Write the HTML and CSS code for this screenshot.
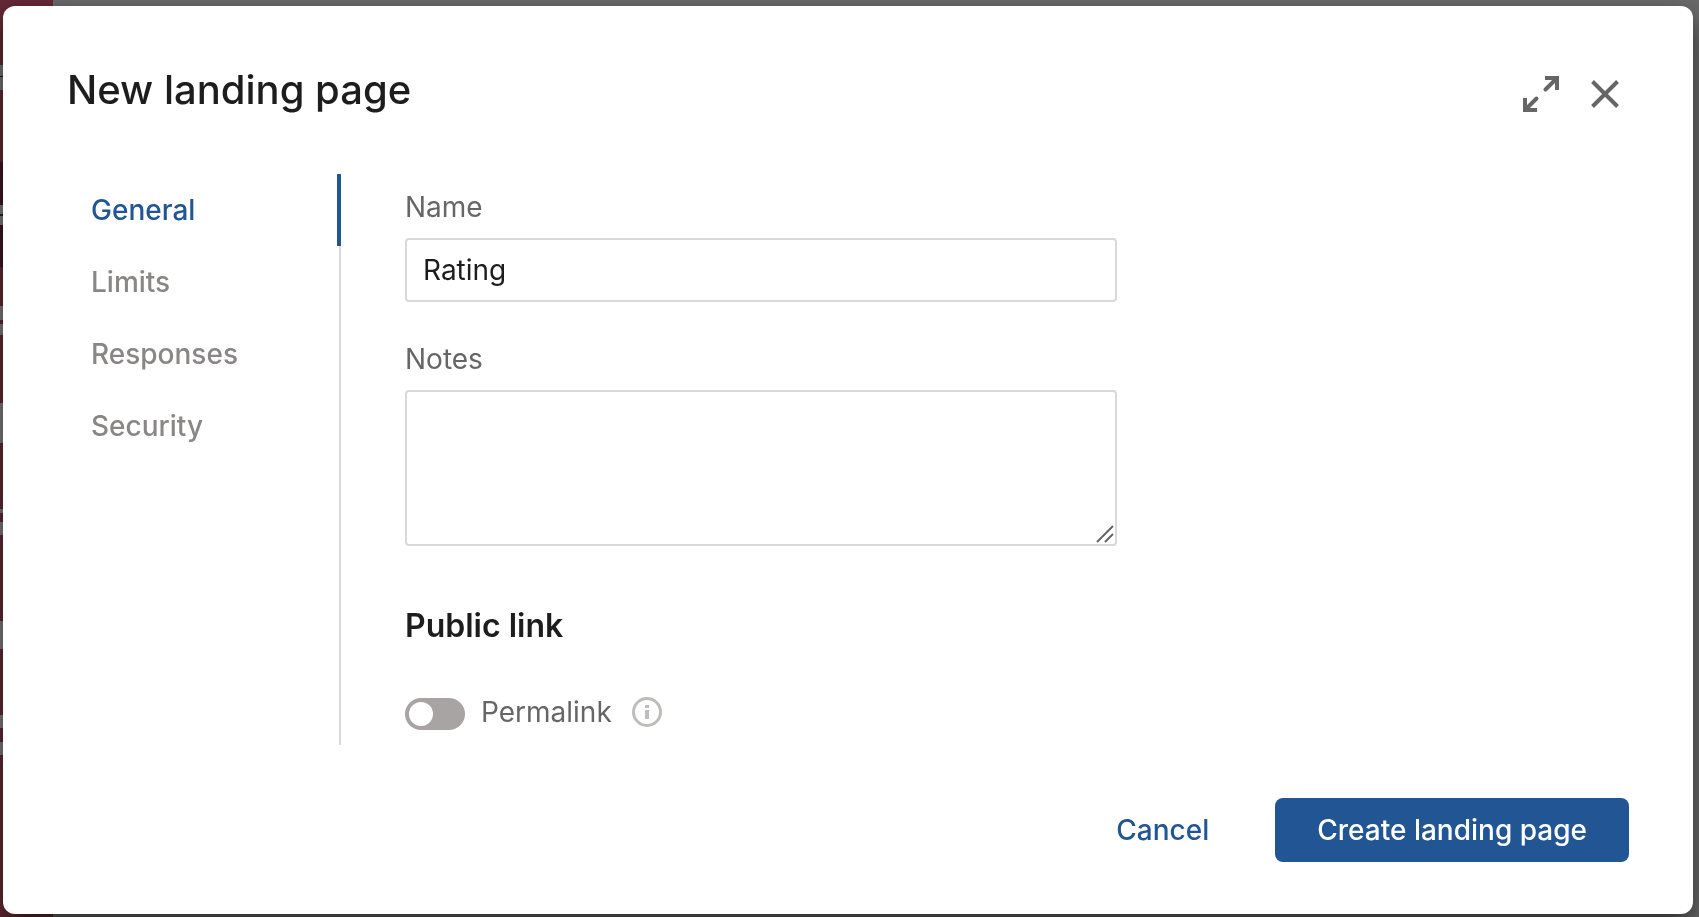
FILE: index.html
```
<!DOCTYPE html>
<html lang="en">
<head>
  <meta charset="UTF-8">
  <meta name="viewport" content="width=device-width, initial-scale=1">
  <title>New landing page</title>
  <link rel="stylesheet" href="styles.css">
</head>
<body>

  <div class="sidebar"></div>

  <div class="overlay">
    <form class="dialog" role="dialog" aria-labelledby="dialog-title" onsubmit="return false">

      <header class="dialog-header">
        <h1 id="dialog-title">New landing page</h1>
        <div class="dialog-actions">
          <button type="button" class="icon-button" aria-label="Expand">
            <svg width="36" height="36" viewBox="0 0 36 36" fill="none" stroke="currentColor" stroke-width="4">
              <path d="M22 2H34V14M2 22V34H14"/>
              <path d="M33 3L22.500 13.500M3 33L13.500 22.500" stroke-linecap="round"/>
            </svg>
          </button>
          <button type="button" class="icon-button" aria-label="Close">
            <svg width="28" height="28" viewBox="0 0 28 28" fill="none" stroke="currentColor" stroke-width="4">
              <path d="M1.500 1.500L26.500 26.500M26.500 1.500L1.500 26.500"/>
            </svg>
          </button>
        </div>
      </header>

      <div class="dialog-body">
        <nav class="tabs">
          <a href="#general" class="tab active">General</a>
          <a href="#limits" class="tab">Limits</a>
          <a href="#responses" class="tab">Responses</a>
          <a href="#security" class="tab">Security</a>
        </nav>

        <div class="content" id="general">
          <div class="field">
            <label for="name">Name</label>
            <input type="text" id="name" class="text-input" value="Rating">
          </div>

          <div class="field">
            <label for="notes">Notes</label>
            <div class="textarea-wrap">
              <textarea id="notes" class="text-input"></textarea>
              <svg class="grip" width="18" height="18" viewBox="0 0 18 18" fill="none" stroke="#5f5f5f" stroke-width="1.800">
                <path d="M1 17L17 1M9 17L17 9"/>
              </svg>
            </div>
          </div>

          <h2>Public link</h2>

          <div class="switch-row">
            <input type="checkbox" id="permalink" class="switch" role="switch">
            <label for="permalink">Permalink</label>
            <button type="button" class="info-button" aria-label="About permalinks">
              <svg width="30" height="30" viewBox="0 0 30 30" fill="none">
                <circle cx="15" cy="15" r="13.500" stroke="currentColor" stroke-width="3"/>
                <path d="M15 8V11M15 13V22" stroke="currentColor" stroke-width="4"/>
              </svg>
            </button>
          </div>
        </div>
      </div>

      <footer class="dialog-footer">
        <button type="button" class="cancel-button">Cancel</button>
        <button type="submit" class="primary-button">Create landing page</button>
      </footer>

    </form>
  </div>

</body>
</html>
```
FILE: styles.css
```
* {
  box-sizing: border-box;
}
body {
  margin: 0;
  min-height: 100vh;
  display: flex;
  background-color: #6b6b6b;
  color: #1d1d1d;
  font-family: Inter, 'Liberation Sans', sans-serif;
  font-size: 28px;
  line-height: 34px;
}

/* dimmed app menu behind the dialog */
.sidebar {
  width: 53px;
  background: linear-gradient(
    #662936 65px,
    #787878 65px 76px, #202020 76px 77px, #787878 77px 90px,
    #662936 90px 162px, #401820 162px 205px,
    #808080 205px 214px, #401820 214px 216px, #808080 216px 225px,
    #401820 225px 267px, #662936 267px 306px,
    #808080 306px 320px, #662936 320px 324px, #808080 324px 335px,
    #662936 335px 403px, #808080 403px 443px,
    #662936 443px 509px, #808080 509px 513px,
    #662936 513px 522px, #808080 522px 535px,
    #662936 535px 621px, #808080 621px 649px,
    #662936 649px 715px, #808080 715px 728px,
    #662936 728px 742px, #808080 742px 755px,
    #662936 755px
  );
}

.overlay {
  position: fixed;
  inset: 0;
  display: flex;
  padding: 6px 6px 3px 3px;
}
.dialog {
  flex: 1;
  display: flex;
  flex-direction: column;
  padding: 60px 64px 52px;
  background-color: #fff;
  border-radius: 12px;
  box-shadow: 0 12px 28px rgba(0, 0, 0, 0.6);
}

.dialog-header {
  display: flex;
  justify-content: space-between;
  margin-bottom: 60px;
}
h1 {
  margin: 0;
  font-size: 40px;
  font-weight: 500;
  line-height: 48px;
}
.dialog-actions {
  display: flex;
  gap: 16px;
  padding-top: 4px;
  height: 48px;
}
.icon-button {
  display: flex;
  align-items: center;
  justify-content: center;
  width: 48px;
  height: 48px;
  padding: 0;
  border: none;
  background: none;
  color: #666;
  cursor: pointer;
}

.dialog-body {
  flex: 1;
  display: flex;
}
.tabs {
  width: 274px;
  box-shadow: inset -2px 0 #d9d9d9;
}
.tab {
  display: block;
  padding: 19px 24px;
  color: #8a8686;
  font-weight: 500;
  text-decoration: none;
}
.tab.active {
  color: #215594;
  border-right: 4px solid #215594;
}

.content {
  flex: 1;
  padding: 16px 0 0 64px;
}
.field {
  display: flex;
  flex-direction: column;
  gap: 14px;
  max-width: 712px;
  margin-bottom: 40px;
}
label {
  color: #666;
}
.text-input {
  display: block;
  width: 100%;
  height: 64px;
  padding: 0 16px;
  border: 2px solid #d9d9d9;
  border-radius: 4px;
  background-color: #fff;
  color: #1d1d1d;
  font: inherit;
}
.textarea-wrap {
  position: relative;
}
textarea.text-input {
  height: 156px;
  padding: 12px 16px;
}
textarea::-webkit-resizer {
  background: transparent;
}
.grip {
  position: absolute;
  right: 3px;
  bottom: 3px;
  pointer-events: none;
}
h2 {
  margin: 60px 0 48px;
  font-size: 32px;
  font-weight: 600;
  line-height: 40px;
}

.switch-row {
  display: flex;
  align-items: center;
}
.switch {
  appearance: none;
  width: 60px;
  height: 32px;
  margin: 4px 16px 0 0;
  padding: 4px;
  border-radius: 16px;
  background-color: #a8a4a4;
  cursor: pointer;
}
.switch::before {
  content: "";
  display: block;
  width: 24px;
  height: 24px;
  border-radius: 50%;
  background-color: #fff;
}
.switch:checked {
  background-color: #215594;
}
.switch:checked::before {
  margin-left: auto;
}
.info-button {
  display: flex;
  margin-left: 20px;
  padding: 0;
  border: none;
  background: none;
  color: #c1bcbc;
  cursor: pointer;
}

.dialog-footer {
  display: flex;
  justify-content: flex-end;
  gap: 24px;
  margin-top: 53px;
}
.cancel-button,
.primary-button {
  height: 64px;
  padding: 0 42px;
  border: none;
  border-radius: 8px;
  background: none;
  color: #215594;
  font: inherit;
  font-weight: 500;
  cursor: pointer;
}
.primary-button {
  background-color: #215594;
  color: #fff;
}
```
